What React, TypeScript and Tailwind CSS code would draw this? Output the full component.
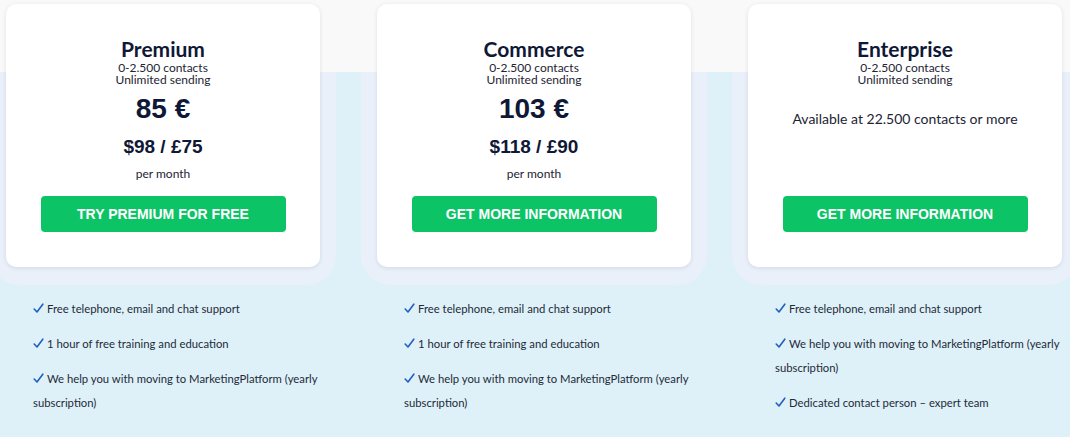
import React from 'react'

type Plan = {
  name: string
  price?: string
  alt?: string
  note?: string
  cta: string
  features: string[]
}

const plans: Plan[] = [
  {
    name: 'Premium',
    price: '85 €',
    alt: '$98 / £75',
    cta: 'TRY PREMIUM FOR FREE',
    features: [
      'Free telephone, email and chat support',
      '1 hour of free training and education',
      'We help you with moving to MarketingPlatform (yearly subscription)',
    ],
  },
  {
    name: 'Commerce',
    price: '103 €',
    alt: '$118 / £90',
    cta: 'GET MORE INFORMATION',
    features: [
      'Free telephone, email and chat support',
      '1 hour of free training and education',
      'We help you with moving to MarketingPlatform (yearly subscription)',
    ],
  },
  {
    name: 'Enterprise',
    note: 'Available at 22.500 contacts or more',
    cta: 'GET MORE INFORMATION',
    features: [
      'Free telephone, email and chat support',
      'We help you with moving to MarketingPlatform (yearly subscription)',
      'Dedicated contact person – expert team',
    ],
  },
]

const lato = "font-['Lato','Noto_Sans',sans-serif]"
const arial = "font-['Liberation_Sans',Arial,sans-serif]"

function Tick() {
  return (
    <svg width="11" height="11" viewBox="0 0 11 11" className="inline-block align-[-1px] mr-[3px]">
      <path d="M1.2 6 L4 9 L9.8 1.2" fill="none" stroke="#1f5fbf" strokeWidth="1.6" strokeLinecap="round" strokeLinejoin="round" />
    </svg>
  )
}

function PlanColumn({ plan }: { plan: Plan }) {
  return (
    <div className="w-[346px] shrink-0">
      {/* halo round the card, only visible on the blue part */}
      <div className="px-4 pt-1 pb-[18px] rounded-b-[30px] bg-[linear-gradient(to_bottom,transparent_72px,#e9f0fa_72px)]">
        <div className="h-[263px] bg-white rounded-[10px] shadow-[0_1px_4px_rgba(30,50,90,0.12)] flex flex-col items-center pt-[33px] pb-[35px] text-[#0f1836]">
          <h2 className={`${lato} text-[21px] leading-6 font-bold`}>{plan.name}</h2>
          <p className={`${lato} text-[12px] leading-3 mt-px text-[#1d2433] text-center whitespace-pre-line`}>
            {'0-2.500 contacts\nUnlimited sending'}
          </p>
          {plan.price && (
            <>
              <div className={`${arial} text-[28px] leading-8 font-bold mt-[7px]`}>{plan.price}</div>
              <div className={`${arial} text-[19px] leading-6 font-bold mt-[10px]`}>{plan.alt}</div>
              <div className={`${lato} text-[12px] leading-4 mt-[7px] text-[#1d2433]`}>per month</div>
            </>
          )}
          {plan.note && (
            <div className={`${lato} text-[14px] leading-5 mt-[23px] text-[#1d2433]`}>{plan.note}</div>
          )}
          <button
            className={`${arial} mt-auto w-[245px] h-9 rounded-[4px] bg-[#0cc466] text-white text-[14px] font-bold`}
          >
            {plan.cta}
          </button>
        </div>
      </div>
      <ul className={`${lato} mt-3 pl-[43px] pr-1 text-[11.3px] leading-6 text-[#222b38]`}>
        {plan.features.map((f) => (
          <li key={f} className="mb-[11px]">
            <Tick />
            {f}
          </li>
        ))}
      </ul>
    </div>
  )
}

export default function App() {
  return (
    <div className="w-[1070px] h-[437px] overflow-hidden bg-[linear-gradient(to_bottom,#f9f9f9_72px,#dff1f8_72px)]">
      <div className="flex gap-[25px] ml-[-10px]">
        {plans.map((p) => (
          <PlanColumn key={p.name} plan={p} />
        ))}
      </div>
    </div>
  )
}
